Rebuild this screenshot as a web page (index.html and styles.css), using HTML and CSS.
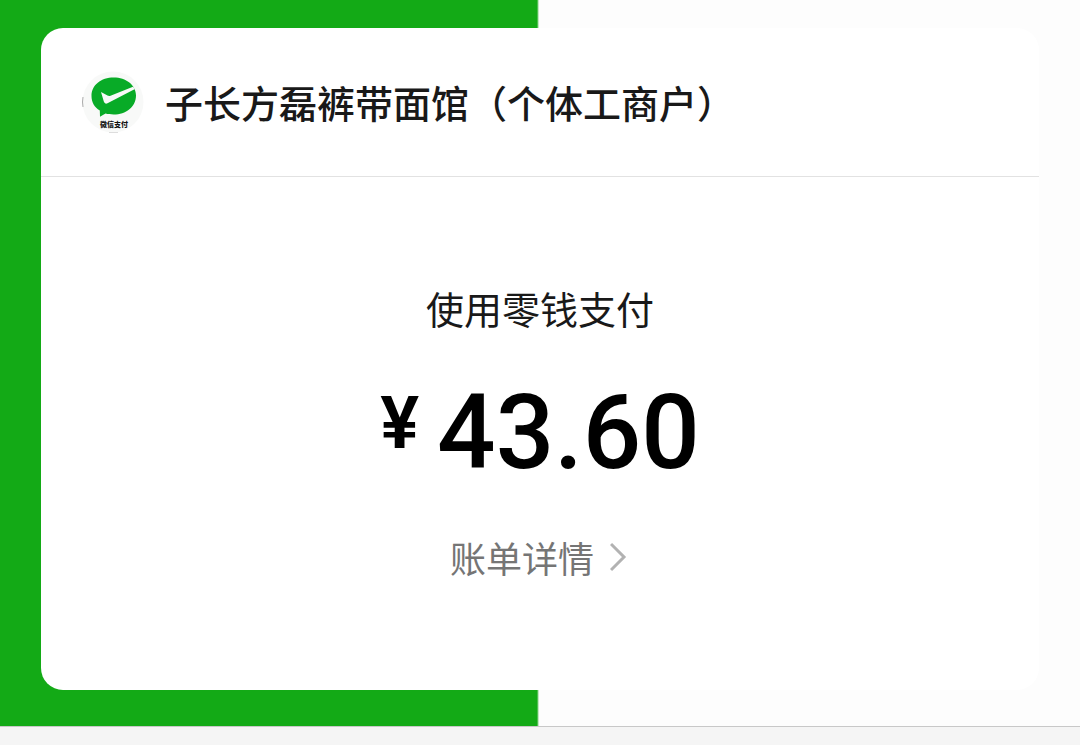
FILE: index.html
```html
<!DOCTYPE html>
<html lang="zh-CN">

<head>
  <meta charset="UTF-8" />
  <meta name="viewport" content="width=device-width, initial-scale=1.0" />
  <title>微信支付</title>
  <link rel="stylesheet" href="styles.css">
</head>

<body>
  <main class="backdrop">
    <section class="card">
      <header class="merchant">
        <svg class="merchant-logo" viewBox="0 0 62 62" role="img" aria-label="微信支付">
          <circle cx="31" cy="31" r="30.5" fill="#f8f9f8" />
          <path d="M1 26 Q0 31 1 36" fill="none" stroke="#aaa" stroke-width="1" />
          <path d="M27 61.5 H36" stroke="#ddd" stroke-width="1" />
          <path d="M31.700 6.500 C44 6.500 54 14 54 24.500 C54 36 44 43.500 31.700 43.500 C28.500 43.500 26 43.200 23.500 42.600 L18 45.700 L17.800 39.500 C12.500 36.500 9.500 31 9.500 25 C9.500 14 19 6.500 31.700 6.500 Z" fill="#08ab27" />
          <path d="M19 21 L25.500 24.600 Q27 25.300 28.500 24.700 L51 15.700 L53 18 L25.500 32.300 Q22.700 33.500 21.800 30.500 Z" fill="#f8f9f8" />
          <text class="logo-text" x="32" y="56" text-anchor="middle">微信支付</text>
        </svg>
        <h1 class="merchant-name">子长方磊裤带面馆（个体工商户）</h1>
      </header>
      <div class="payment">
        <p class="method">使用零钱支付</p>
        <p class="amount"><span class="currency">¥</span><span>43.60</span></p>
        <a class="detail" href="#">
          账单详情
          <svg class="chevron" viewBox="0 0 20 30" aria-hidden="true">
            <path d="M1 2 L14 15 L1 28" />
          </svg>
        </a>
      </div>
    </section>
  </main>
  <footer class="bottom-bar"></footer>
</body>

</html>
```

FILE: styles.css
```css
body {
  display: flex;
  flex-direction: column;
  min-height: 100vh;
  margin: 0;
  background-color: #f5f5f5;
  color: #191919;
  font-family: "Noto Sans CJK SC", sans-serif;
}

.backdrop {
  padding: 28px 41px 36px;
  background: linear-gradient(to right, #13aa16 calc(50% - 3px), #fdfdfd calc(50% - 1px));
}

.card {
  background-color: #fff;
  border-radius: 22px;
}

.merchant {
  display: flex;
  align-items: center;
  gap: 21px;
  padding: 43px 41px;
  border-bottom: 1px solid #e2e2e2;
}

.merchant-logo {
  flex: none;
  width: 62px;
  height: 62px;
}

.logo-text {
  font-family: "Noto Sans CJK SC", sans-serif;
  font-size: 7px;
  font-weight: 900;
  fill: #111;
}

.merchant-name {
  margin: 0;
  font-size: 38px;
  font-weight: 500;
  line-height: 58px;
}

.payment {
  display: flex;
  flex-direction: column;
  align-items: center;
  padding: 103px 41px 109px;
}

.method {
  margin: 0;
  font-size: 38px;
  line-height: 56px;
}

.amount {
  display: flex;
  align-items: flex-start;
  gap: 18px;
  margin: 45px 0 48px;
  color: #000;
  font-family: Roboto, sans-serif;
  font-size: 103px;
  font-weight: 500;
  line-height: 104px;
}

.currency {
  padding-top: 5px;
  font-size: 73px;
  font-weight: 600;
  line-height: 74px;
}

.detail {
  display: flex;
  align-items: center;
  gap: 16px;
  color: #757575;
  font-size: 36px;
  line-height: 48px;
  text-decoration: none;
}

.chevron {
  width: 20px;
  height: 30px;
  fill: none;
  stroke: #b2b2b2;
  stroke-width: 3;
}

.bottom-bar {
  flex: 1;
  border-top: 1px solid #c8c8c8;
}
```
